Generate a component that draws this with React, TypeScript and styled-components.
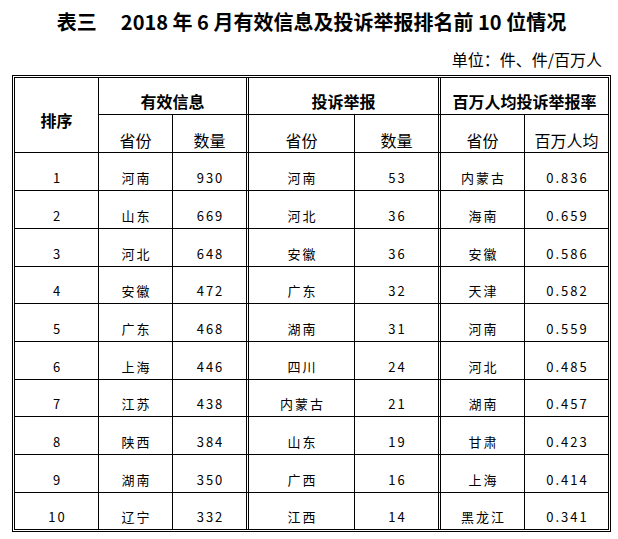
import React from "react";
import styled, { createGlobalStyle } from "styled-components";

interface Row {
    rank: number;
    infoProv: string;
    infoCount: number;
    compProv: string;
    compCount: number;
    rateProv: string;
    rate: string;
    h: number;
}

const rows: Row[] = [
    { rank: 1, infoProv: "河南", infoCount: 930, compProv: "河南", compCount: 53, rateProv: "内蒙古", rate: "0.836", h: 38 },
    { rank: 2, infoProv: "山东", infoCount: 669, compProv: "河北", compCount: 36, rateProv: "海南", rate: "0.659", h: 38 },
    { rank: 3, infoProv: "河北", infoCount: 648, compProv: "安徽", compCount: 36, rateProv: "安徽", rate: "0.586", h: 38 },
    { rank: 4, infoProv: "安徽", infoCount: 472, compProv: "广东", compCount: 32, rateProv: "天津", rate: "0.582", h: 37 },
    { rank: 5, infoProv: "广东", infoCount: 468, compProv: "湖南", compCount: 31, rateProv: "河南", rate: "0.559", h: 38 },
    { rank: 6, infoProv: "上海", infoCount: 446, compProv: "四川", compCount: 24, rateProv: "河北", rate: "0.485", h: 38 },
    { rank: 7, infoProv: "江苏", infoCount: 438, compProv: "内蒙古", compCount: 21, rateProv: "湖南", rate: "0.457", h: 37 },
    { rank: 8, infoProv: "陕西", infoCount: 384, compProv: "山东", compCount: 19, rateProv: "甘肃", rate: "0.423", h: 38 },
    { rank: 9, infoProv: "湖南", infoCount: 350, compProv: "广西", compCount: 16, rateProv: "上海", rate: "0.414", h: 38 },
    { rank: 10, infoProv: "辽宁", infoCount: 332, compProv: "江西", compCount: 14, rateProv: "黑龙江", rate: "0.341", h: 37 },
];

// column widths, each including its own left border
const COLS = "83px 74px 74px 108px 84px 86px 84px";

const App = () => {
    return (
        <Page>
            <GlobalStyle />
            <Title>
                <span>表三</span>
                <span>2018 年 6 月有效信息及投诉举报排名前 10 位情况</span>
            </Title>
            <Unit>单位：件、件/百万人</Unit>
            <Frame>
                <Header>
                    <RankHead>排序</RankHead>
                    <GroupHead $col="2 / 4">有效信息</GroupHead>
                    <GroupHead $col="4 / 6" $sep>投诉举报</GroupHead>
                    <GroupHead $col="6 / 8" $sep>百万人均投诉举报率</GroupHead>
                    <SubHead>省份</SubHead>
                    <SubHead>数量</SubHead>
                    <SubHead $sep>省份</SubHead>
                    <SubHead>数量</SubHead>
                    <SubHead $sep>省份</SubHead>
                    <SubHead>百万人均</SubHead>
                </Header>
                {rows.map(r => (
                    <DataRow key={r.rank} $h={r.h}>
                        <Cell $first>{r.rank}</Cell>
                        <Cell>{r.infoProv}</Cell>
                        <Cell>{r.infoCount}</Cell>
                        <Cell $sep>{r.compProv}</Cell>
                        <Cell>{r.compCount}</Cell>
                        <Cell $sep>{r.rateProv}</Cell>
                        <Cell>{r.rate}</Cell>
                    </DataRow>
                ))}
            </Frame>
        </Page>
    );
};

const GlobalStyle = createGlobalStyle`
  html, body {
    margin: 0;
    padding: 0;
    background: #fff;
  }
  body {
    font-family: "Noto Sans CJK SC", "Noto Sans", sans-serif;
    color: #000;
  }
`;

const Page = styled.div`
  width: 618px;
  height: 539px;
  padding: 10px 0 0 12px;
  box-sizing: border-box;
  overflow: hidden;
  display: flex;
  flex-direction: column;
`;

const Title = styled.h1`
  margin: 0;
  width: 599px;
  height: 24px;
  flex: none;
  display: flex;
  align-items: center;
  justify-content: center;
  gap: 24px;
  font-size: 20px;
  line-height: 24px;
  font-weight: 700;
  white-space: nowrap;
`;

const Unit = styled.p`
  margin: 15px 0 0 0;
  width: 599px;
  height: 20px;
  flex: none;
  display: flex;
  align-items: center;
  justify-content: flex-end;
  font-size: 16px;
  line-height: 20px;
  padding-right: 9px;
  box-sizing: border-box;
`;

const Frame = styled.div`
  margin-top: 6px;
  width: 599px;
  height: 457px;
  flex: none;
  border: 3px double #000;
  box-sizing: border-box;
  display: flex;
  flex-direction: column;
`;

const Header = styled.div`
  display: grid;
  grid-template-columns: ${COLS};
  grid-template-rows: 36px 38px;
  height: 74px;
  flex: none;
`;

const sepBorder = (sep?: boolean) => (sep ? "3px double #000" : "1px solid #000");

const HeadCell = styled.div`
  display: flex;
  align-items: center;
  justify-content: center;
  box-sizing: border-box;
  font-size: 16px;
  line-height: 20px;
  white-space: nowrap;
  overflow: hidden;
`;

const RankHead = styled(HeadCell)`
  grid-row: 1 / 3;
  grid-column: 1;
  padding-top: 9px;
  font-weight: 700;
`;

const GroupHead = styled(HeadCell)<{ $col: string; $sep?: boolean }>`
  grid-row: 1;
  grid-column: ${p => p.$col};
  border-left: ${p => sepBorder(p.$sep)};
  padding-top: 9px;
  font-weight: 700;
`;

const SubHead = styled(HeadCell)<{ $sep?: boolean }>`
  grid-row: 2;
  border-top: 1px solid #000;
  border-left: ${p => sepBorder(p.$sep)};
  padding-top: 12px;
`;

const DataRow = styled.div<{ $h: number }>`
  display: grid;
  grid-template-columns: ${COLS};
  grid-template-rows: ${p => p.$h - 1}px;
  height: ${p => p.$h}px;
  flex: none;
  border-top: 1px solid #000;
  box-sizing: border-box;
`;

const Cell = styled.div<{ $sep?: boolean; $first?: boolean }>`
  display: flex;
  align-items: center;
  justify-content: center;
  box-sizing: border-box;
  border-left: ${p => (p.$first ? "none" : sepBorder(p.$sep))};
  padding-top: 12px;
  font-size: 13px;
  line-height: 18px;
  letter-spacing: 2px;
  text-indent: 2px;
  white-space: nowrap;
  overflow: hidden;
`;

export default App;
